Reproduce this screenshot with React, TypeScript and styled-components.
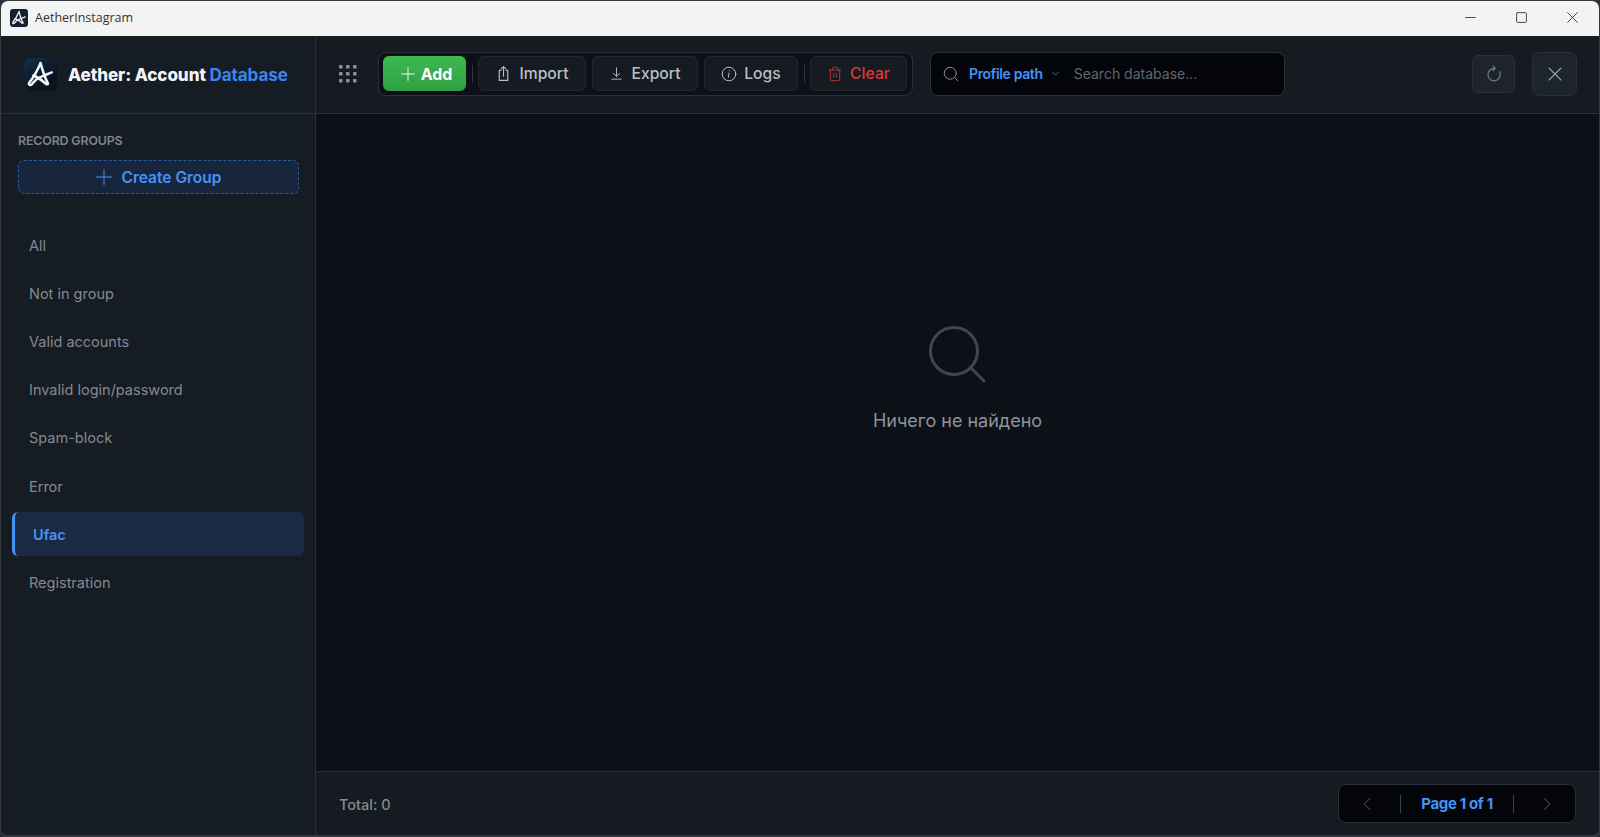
import React from "react";
import styled, { createGlobalStyle } from "styled-components";
import { ChevronDown, ChevronLeft, ChevronRight, Plus, Search, Trash2, X } from "lucide-react";

const Global = createGlobalStyle`
  html, body { margin: 0; padding: 0; height: 100%; background: #2e3238; }
  #root { height: 100%; }
  * { box-sizing: border-box; }
`;

const Window = styled.div`
  width: 1600px; height: 837px; display: flex; flex-direction: column; overflow: hidden;
  border-radius: 8px; border: 1px solid #34383e; border-bottom-width: 2px;
  font-family: Inter, "Noto Sans", sans-serif; background: #161b22;
`;
const TitleBar = styled.div`
  height: 35px; flex: none; background: #f3f3f3; display: flex; align-items: center; padding: 0 1px 2px 9px;
`;
const TitleLogo = styled.div`
  width: 18px; height: 18px; border-radius: 3px; background: #14202f; display: flex; align-items: center; justify-content: center;
`;
const TitleText = styled.span`
  margin-left: 7px; font: 400 12.5px "Open Sans", sans-serif; color: #333;
`;
const WinControls = styled.div`
  margin-left: auto; display: flex; align-items: center; gap: 0;
`;
const WinButton = styled.div`
  width: 51px; height: 32px; display: flex; align-items: center; justify-content: center; color: #222;
`;
const Body = styled.div`
  flex: 1; min-height: 0; display: flex;
`;
const Sidebar = styled.aside`
  width: 315px; flex: none; display: flex; flex-direction: column; background: #161c24; border-right: 1px solid #2b3038;
`;
const Brand = styled.div`
  height: 78px; flex: none; display: flex; align-items: center; gap: 11px; padding-left: 23px; border-bottom: 1px solid #2b3038;
`;
const BrandLogo = styled.div`
  width: 33px; height: 33px; border-radius: 6px; display: flex; align-items: center; justify-content: center;
  background: linear-gradient(145deg, #10314a, #0b1220 70%);
`;
const BrandText = styled.h1`
  margin: 0; font-size: 17.1px; font-weight: 800; color: #f2f5f8; letter-spacing: -0.1px;
`;
const BrandAccent = styled.span`
  color: #3a86f0; font-weight: 700;
`;
const Groups = styled.div`
  flex: 1; display: flex; flex-direction: column; padding: 19px 11px 0 11px;
`;
const SectionLabel = styled.div`
  margin: 0 0 12px 6px; font-size: 12.4px; font-weight: 600; line-height: 15px; color: #7f848b; letter-spacing: -0.15px;
`;
const CreateButton = styled.button`
  margin: 0 5px 0 6px; height: 34px; padding: 0 5px 0 0; display: flex; align-items: center; justify-content: center; gap: 5px;
  background: #17263c; border: 1px dashed #2a5a9c; border-radius: 6px; color: #4493f8;
  font: 600 15.5px Inter, sans-serif;
`;
const GroupList = styled.nav`
  margin-top: 29px; display: flex; flex-direction: column; gap: 4px;
`;
const GroupItem = styled.div<{ $active?: boolean }>`
  height: 44.2px; display: flex; align-items: center; font-size: 14.5px; border-radius: 6px;
  padding-left: ${(p) => (p.$active ? "18px" : "17px")};
  font-weight: ${(p) => (p.$active ? 600 : 400)};
  color: ${(p) => (p.$active ? "#4493f8" : "#85898f")};
  background: ${(p) => (p.$active ? "#1b2a43" : "transparent")};
  border-left: ${(p) => (p.$active ? "3px solid #4493f8" : "0")};
`;
const Main = styled.main`
  flex: 1; min-width: 0; display: flex; flex-direction: column;
`;
const Toolbar = styled.header`
  height: 78px; flex: none; display: flex; align-items: center; padding: 0 0 2px 20px; background: #161b22; border-bottom: 1px solid #2b3038;
`;
const GripButton = styled.div`
  width: 24px; height: 24px; display: flex; align-items: center; justify-content: center; color: #8b8f96; margin-right: 18px;
`;
const ActionGroup = styled.div`
  height: 44px; display: flex; align-items: center; gap: 6px; padding: 0 5px 0 4px; background: #0d1117; border: 1px solid #2b3038; border-radius: 8px;
`;
const ActionButton = styled.button<{ $w: number; $tone?: "danger" }>`
  width: ${(p) => p.$w}px; height: 35px; display: flex; align-items: center; justify-content: center; gap: 7px;
  background: #161b22; border: 1px solid #23282f; border-radius: 6px;
  color: ${(p) => (p.$tone === "danger" ? "#d73a38" : "#b9bfc8")};
  font: 500 15.7px Inter, sans-serif;
`;
const AddButton = styled.button`
  width: 83px; height: 35px; display: flex; align-items: center; justify-content: center; gap: 2px;
  background: linear-gradient(180deg, #3fb950, #2ea043); border: 0; border-radius: 6px;
  color: #fff; font: 700 16px Inter, sans-serif;
`;
const Divider = styled.div`
  width: 1px; height: 18px; background: #30363d; margin: 0 -0.5px;
`;
const SearchBox = styled.div`
  margin-left: 17px; width: 355px; height: 44px; display: flex; align-items: center; padding-left: 11px;
  background: #03050a; border: 1px solid #2b3038; border-radius: 8px; color: #8b8f96;
`;
const SearchScope = styled.div`
  margin-left: 9px; display: flex; align-items: center; gap: 6px; color: #4493f8; font-size: 14px; font-weight: 600; letter-spacing: -0.35px;
`;
const SearchPlaceholder = styled.span`
  margin-left: 12px; font-size: 14px; color: #63676d;
`;
const ToolbarEnd = styled.div`
  margin-left: auto; display: flex; align-items: center; gap: 17px; padding-right: 22px;
`;
const RefreshButton = styled.div`
  width: 43px; height: 38px; display: flex; align-items: center; justify-content: center; color: #737a84;
  background: #1e242c; border: 1px solid #2b3038; border-radius: 6px;
`;
const CloseButton = styled.div`
  width: 45px; height: 44px; display: flex; align-items: center; justify-content: center; color: #9aa0a8;
  background: #1e242c; border: 1px solid #2b3038; border-radius: 8px;
`;
const Content = styled.section`
  flex: 1; min-height: 0; background: #0d1117; display: flex; flex-direction: column; align-items: center; padding-top: 211px;
  color: #4a4f56;
`;
const EmptyText = styled.p`
  margin: 25px 0 0; font-size: 18px; color: #8b949e; line-height: 22px;
`;
const Footer = styled.footer`
  height: 64px; flex: none; display: flex; align-items: center; justify-content: space-between; padding: 0 23px;
  background: #161b22; border-top: 1px solid #2b3038;
`;
const Total = styled.span`
  padding-top: 2px; font-size: 14.5px; font-weight: 500; color: #85898f;
`;
const Pager = styled.div`
  width: 238px; height: 39px; display: flex; align-items: center; gap: 5px; background: #03050a; border: 1px solid #2b3038; border-radius: 8px; color: #4a5058;
`;
const PagerArrow = styled.div`
  width: 56px; display: flex; align-items: center; justify-content: center;
`;
const PagerSep = styled.div`
  width: 1px; height: 18px; background: #3a4048;
`;
const PagerLabel = styled.span`
  flex: 1; text-align: center; color: #4493f8; font-size: 15px; font-weight: 700; letter-spacing: -0.35px;
`;

const Mark = ({ size }: { size: number }) => (
  <svg width={size} height={size} viewBox="0 0 32 32" fill="none" stroke="#f2f5f8" strokeWidth="2.4" strokeLinecap="round" strokeLinejoin="round">
    <path d="M16 5C13 12 9 19 5 24c-1 2 1 3 3 1 3-4 6-6 9-7 3-1 7-3 10-4" />
    <path d="M16 5c2 7 4 14 7 19 1 2-1 2-3 0-4-4-8-6-11-7" />
  </svg>
);

const Stroke = ({ size, children, width }: { size: number; children: React.ReactNode; width?: number }) => (
  <svg width={size} height={size} viewBox="0 0 16 16" fill="none" stroke="currentColor" strokeWidth={width ?? 1} strokeLinecap="round" strokeLinejoin="round">
    {children}
  </svg>
);

const groups = ["All", "Not in group", "Valid accounts", "Invalid login/password", "Spam-block", "Error", "Ufac", "Registration"];
const dots = [0, 7, 14];

export default function App() {
  return (
    <>
      <Global />
      <Window>
        <TitleBar>
          <TitleLogo><Mark size={18} /></TitleLogo>
          <TitleText>AetherInstagram</TitleText>
          <WinControls>
            <WinButton>
              <Stroke size={13}><path d="M2 8h12" /></Stroke>
            </WinButton>
            <WinButton>
              <Stroke size={13}><rect x="2" y="2" width="12" height="12" rx="1" /></Stroke>
            </WinButton>
            <WinButton>
              <Stroke size={13}><path d="M2 2l12 12M14 2L2 14" /></Stroke>
            </WinButton>
          </WinControls>
        </TitleBar>
        <Body>
          <Sidebar>
            <Brand>
              <BrandLogo><Mark size={33} /></BrandLogo>
              <BrandText>Aether: Account <BrandAccent>Database</BrandAccent></BrandText>
            </Brand>
            <Groups>
              <SectionLabel>RECORD GROUPS</SectionLabel>
              <CreateButton><Plus size={26} strokeWidth={0.9} />Create Group</CreateButton>
              <GroupList>
                {groups.map((g) => (
                  <GroupItem key={g} $active={g === "Ufac"}>{g}</GroupItem>
                ))}
              </GroupList>
            </Groups>
          </Sidebar>
          <Main>
            <Toolbar>
              <GripButton>
                <svg width="18" height="18" viewBox="0 0 18 18" fill="currentColor">
                  {dots.flatMap((y) => dots.map((x) => <rect key={`${x}-${y}`} x={x} y={y} width="3.6" height="3.6" rx="0.8" />))}
                </svg>
              </GripButton>
              <ActionGroup>
                <AddButton><Plus size={22} strokeWidth={1} />Add</AddButton>
                <Divider />
                <ActionButton $w={108}>
                  <Stroke size={17} width={1.1}><path d="M5.500 5H4v9.500h8V5h-1.500M8 10.500V1.500M5.800 3.700L8 1.500l2.200 2.200" /></Stroke>
                  Import
                </ActionButton>
                <ActionButton $w={106}>
                  <Stroke size={15}><path d="M8 2v9M4.800 8L8 11l3.200-3M3 14h10" /></Stroke>
                  Export
                </ActionButton>
                <ActionButton $w={94}>
                  <Stroke size={16}><circle cx="8" cy="8" r="6.800" /><path d="M8.300 4.700v.1M8 7l-.6 4.200" /></Stroke>
                  Logs
                </ActionButton>
                <Divider />
                <ActionButton $w={97} $tone="danger">
                  <Trash2 size={16} strokeWidth={1.2} />
                  Clear
                </ActionButton>
              </ActionGroup>
              <SearchBox>
                <Search size={18} strokeWidth={1.3} />
                <SearchScope>Profile path<ChevronDown size={13} strokeWidth={1.3} /></SearchScope>
                <SearchPlaceholder>Search database...</SearchPlaceholder>
              </SearchBox>
              <ToolbarEnd>
                <RefreshButton>
                  <Stroke size={18} width={1.1}><path d="M8.500 3A5.500 5.500 0 1 0 13 6M7 1l2.200 2L7 5" /></Stroke>
                </RefreshButton>
                <CloseButton><X size={24} strokeWidth={1.1} /></CloseButton>
              </ToolbarEnd>
            </Toolbar>
            <Content>
              <svg width="60" height="60" viewBox="0 0 60 60" fill="none" stroke="#41464d" strokeWidth="3" strokeLinecap="round">
                <circle cx="26" cy="26" r="23.500" />
                <path d="M43 43l13 13" />
              </svg>
              <EmptyText>Ничего не найдено</EmptyText>
            </Content>
            <Footer>
              <Total>Total: 0</Total>
              <Pager>
                <PagerArrow><ChevronLeft size={22} strokeWidth={1.1} /></PagerArrow>
                <PagerSep />
                <PagerLabel>Page 1 of 1</PagerLabel>
                <PagerSep />
                <PagerArrow><ChevronRight size={22} strokeWidth={1.1} /></PagerArrow>
              </Pager>
            </Footer>
          </Main>
        </Body>
      </Window>
    </>
  );
}
